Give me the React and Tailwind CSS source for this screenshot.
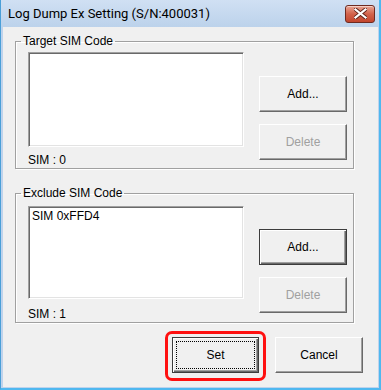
const font = { fontFamily: '"Liberation Sans", Arial, sans-serif' };
const titleFont = { fontFamily: 'Roboto, "Liberation Sans", sans-serif' };

const raised =
  'border border-t-white border-l-white border-r-[#696969] border-b-[#696969] shadow-[inset_-1px_-1px_0_#a0a0a0]';

const Button = ({ children, disabled, isDefault, focused, className = '' }) => {
  const frame = isDefault
    ? 'border border-[#3c3c3c] shadow-[inset_1px_1px_0_#fff,inset_-1px_-1px_0_#696969,inset_-2px_-2px_0_#a0a0a0]'
    : raised;
  return (
    <div
      className={`relative flex items-center justify-center bg-[#f0f0f0] text-[12px] ${frame} ${
        disabled ? 'text-[#a0a0a0]' : 'text-black'
      } ${className}`}
    >
      {focused && (
        <div className="absolute inset-[3px] border border-dotted border-black" />
      )}
      <span className="relative">{children}</span>
    </div>
  );
};

const ListBox = ({ items, className = '' }) => (
  <div
    className={`bg-white border border-t-[#a0a0a0] border-l-[#a0a0a0] border-r-white border-b-white shadow-[inset_1px_1px_0_#696969,inset_-1px_-1px_0_#e3e3e3] px-[3px] pt-[2px] text-[12px] leading-[14px] ${className}`}
  >
    {items.map((it) => (
      <div key={it}>{it}</div>
    ))}
  </div>
);

const GroupBox = ({ title, items, count, listClass, addClass, delClass, labelClass, addDefault, className = '' }) => (
  <fieldset
    className={`w-[339px] border border-[#a0a0a0] shadow-[1px_1px_0_#fff,inset_1px_1px_0_#fff] pl-[12px] pr-[6px] pb-[1px] ${className}`}
  >
    <legend className="-ml-[7px] px-[2px] text-[12px] leading-[14px] h-[14px]">{title}</legend>
    <div className="flex">
      <div className="flex flex-col">
        <ListBox items={items} className={listClass} />
        <div className={`text-[12px] leading-[13px] h-[13px] ${labelClass}`}>SIM : {count}</div>
      </div>
      <div className="flex flex-col ml-auto">
        <Button isDefault={addDefault} className={`w-[88px] h-[36px] ${addClass}`}>
          Add...
        </Button>
        <Button disabled className={`w-[88px] h-[36px] ${delClass}`}>
          Delete
        </Button>
      </div>
    </div>
  </fieldset>
);

const CloseButton = () => (
  <div className="w-[30px] h-[18px] rounded-[3px] border border-[#6e2a20] bg-gradient-to-b from-[#e8a493] via-[#d2624a] to-[#c2452d] shadow-[inset_0_1px_0_#f4cfc5] flex items-center justify-center">
    <svg width="13" height="11" viewBox="0 0 13 11">
      <path
        d="M1.5 1.5 L11.5 9.5 M11.5 1.5 L1.5 9.5"
        stroke="#5a2018"
        strokeWidth="4"
        strokeLinecap="square"
      />
      <path
        d="M1.5 1.5 L11.5 9.5 M11.5 1.5 L1.5 9.5"
        stroke="#ffffff"
        strokeWidth="2.2"
        strokeLinecap="square"
      />
    </svg>
  </div>
);

export default function App() {
  return (
    <div
      className="w-[381px] h-[390px] bg-[#bfd3ec] border-l border-l-[#4a9fd8] border-r-[2px] border-r-[#4fb8f0] border-b-[2px] border-b-[#4fb8f0] flex flex-col overflow-hidden"
      style={font}
    >
      <div className="h-[27px] flex items-center justify-between pl-[7px] pr-[4px] bg-gradient-to-b from-[#d0e0f3] to-[#bcd2eb]">
        <span className="text-[13px] text-black" style={titleFont}>
          Log Dump Ex Setting (S/N:400031)
        </span>
        <CloseButton />
      </div>
      <div className="flex-1 flex flex-col ml-[2px] mr-[1px] mb-[1px] bg-[#f0f0f0] pl-[12px]">
        <GroupBox
          title="Target SIM Code"
          items={[]}
          count={0}
          className="mt-[7px]"
          listClass="w-[216px] h-[95px] mt-[4px]"
          labelClass="mt-[7px]"
          addClass="mt-[28px]"
          delClass="mt-[12px]"
        />
        <GroupBox
          title="Exclude SIM Code"
          items={['SIM 0xFFD4']}
          count={1}
          className="mt-[17px]"
          listClass="w-[216px] h-[93px] mt-[6px]"
          labelClass="mt-[9px]"
          addClass="mt-[29px]"
          delClass="mt-[12px]"
          addDefault
        />
        <div className="flex mt-[14px] ml-[157px] gap-[16px]">
          <div className="relative">
            <div className="absolute -left-[7px] -top-[6px] -right-[7px] -bottom-[8px] border-[3px] border-[#ff1010] rounded-[7px]" />
            <Button isDefault focused className="w-[87px] h-[36px]">
              Set
            </Button>
          </div>
          <Button className="w-[88px] h-[36px]">Cancel</Button>
        </div>
      </div>
    </div>
  );
}
